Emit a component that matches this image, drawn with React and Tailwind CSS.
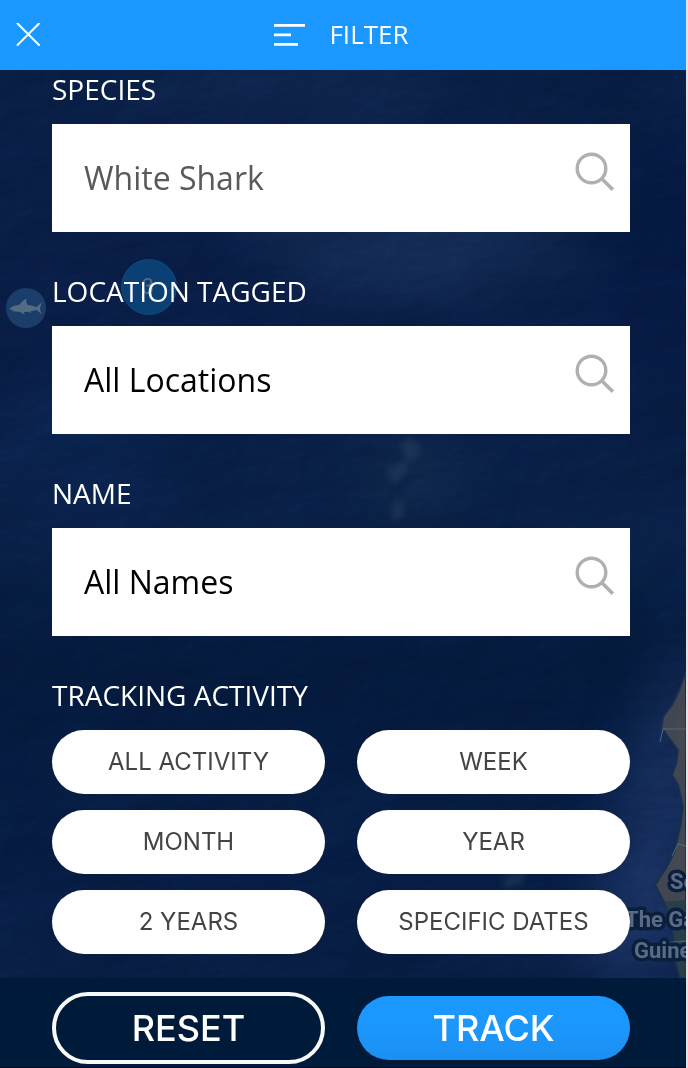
import React from "react";

const fields = [
  { id: "species", label: "SPECIES", value: "White Shark", tone: "text-[#58595b]" },
  { id: "location", label: "LOCATION TAGGED", value: "All Locations", tone: "text-black" },
  { id: "name", label: "NAME", value: "All Names", tone: "text-black" },
];

const periods = ["ALL ACTIVITY", "WEEK", "MONTH", "YEAR", "2 YEARS", "SPECIFIC DATES"];

function SearchIcon() {
  return (
    <svg className="mt-7 size-10 shrink-0" viewBox="0 0 40 40" fill="none" stroke="#b0b0b0" aria-hidden="true">
      <circle cx="17.5" cy="16.5" r="14.3" strokeWidth="3.4" />
      <path d="M27.8 26.8L38.8 37.6" strokeWidth="3.6" />
    </svg>
  );
}

function OceanMap() {
  return (
    <svg
      className="absolute inset-0 size-full"
      viewBox="0 0 686 1068"
      preserveAspectRatio="xMidYMid slice"
      aria-hidden="true"
    >
      <defs>
        <linearGradient id="sea" x1="0" y1="0" x2="0" y2="1">
          <stop offset="0" stopColor="#0b2149" />
          <stop offset="0.3" stopColor="#0a1e48" />
          <stop offset="0.5" stopColor="#0a2149" />
          <stop offset="0.63" stopColor="#051b3e" />
          <stop offset="0.8" stopColor="#081e47" />
          <stop offset="1" stopColor="#0c2148" />
        </linearGradient>
        <filter id="soft" x="-50%" y="-50%" width="200%" height="200%" colorInterpolationFilters="sRGB">
          <feGaussianBlur stdDeviation="26" />
        </filter>
        <filter id="haze" x="-50%" y="-50%" width="200%" height="200%" colorInterpolationFilters="sRGB">
          <feGaussianBlur stdDeviation="3" />
        </filter>
        <filter id="relief" x="0" y="0" width="100%" height="100%" colorInterpolationFilters="sRGB">
          <feTurbulence type="fractalNoise" baseFrequency="0.012 0.022" numOctaves="5" seed="8" />
          <feDiffuseLighting surfaceScale="5" diffuseConstant="0.65" lightingColor="#ffffff">
            <feDistantLight azimuth="225" elevation="50" />
          </feDiffuseLighting>
        </filter>
        <filter id="depth" x="0" y="0" width="100%" height="100%" colorInterpolationFilters="sRGB">
          <feTurbulence type="fractalNoise" baseFrequency="0.006 0.008" numOctaves="2" seed="4" />
          <feColorMatrix values="0 0 0 0 0.02  0 0 0 0 0.09  0 0 0 0 0.22  2 0 0 0 -0.7" />
        </filter>
      </defs>
      <rect width="686" height="1068" fill="url(#sea)" />
      <g filter="url(#soft)">
        <ellipse cx="420" cy="240" rx="170" ry="60" fill="#142c56" />
        <ellipse cx="280" cy="90" rx="160" ry="40" fill="#10264f" />
        <ellipse cx="660" cy="250" rx="50" ry="120" fill="#061a43" />
        <ellipse cx="90" cy="450" rx="100" ry="50" fill="#0b2652" />
        <ellipse cx="410" cy="480" rx="50" ry="60" fill="#10294e" />
        <path d="M700 610L650 700L625 800L590 980H700Z" fill="#1a3363" />
      </g>
      <rect width="686" height="1068" filter="url(#depth)" opacity="0.35" />
      <rect width="686" height="1068" filter="url(#relief)" opacity="0.3" className="mix-blend-soft-light" />
      <g fill="#273f5e" opacity="0.55" filter="url(#haze)">
        <path d="M400 444l12-6 10 12 -10 12 -8-4z" />
        <path d="M388 468l16-6 6 10 -12 14 -8-6z" />
        <path d="M392 504l10-6 2 18 -12 6z" />
        <path d="M506 876l20-4 -4 12 -20 4z" />
      </g>
      <path d="M414 470L400 490L392 492L404 476Z" fill="#06173a" opacity="0.6" filter="url(#haze)" />
      <path
        d="M686 672L678 693L672 705L663 717L661 730L664 731L668 737L672 742L678 750L676 764L672 775L678 785L683 807L680 827L674 853L666 868L655 885L663 900L672 920L675 960L680 978H686Z"
        fill="#414752"
        stroke="#182f50"
        strokeWidth="2"
      />
      <path d="M686 700L676 725L678 742L686 760ZM686 830L676 858L666 880L686 884Z" fill="#4b4c55" opacity="0.5" filter="url(#haze)" />
      <path d="M686 900L664 902L672 925L675 958L680 978H686Z" fill="#203c48" opacity="0.75" />
      <path d="M660 742L663 729H686M672 856L678 844L686 846M663 943L686 941" fill="none" stroke="#50697b" strokeWidth="1" />
      <g
        className="font-[Roboto,sans-serif] text-[22px] font-bold"
        fill="#5b6b83"
        stroke="#0a1f3c"
        strokeWidth="7"
        strokeLinejoin="round"
        paintOrder="stroke"
      >
        <text x="670" y="889">Se</text>
        <text x="625" y="927">The Ga</text>
        <text x="634" y="958">Guine</text>
      </g>
      <circle cx="149" cy="287" r="27.5" fill="#0a4073" stroke="#0c4a80" />
      <text x="148" y="294" textAnchor="middle" className="font-[Roboto,sans-serif] text-[22px]" fill="#526b83">
        3
      </text>
      <circle cx="26" cy="308" r="20" fill="#1a3e69" />
      <path
        d="M9.500 308.500C12 306 16 305.200 19.500 304.800C21.500 302 24 299.600 26.300 298.800C26 301.500 26.500 303.600 27.500 305C31 305.400 34 306.200 36.500 307.200C38 305.500 40 303.400 42.200 302.400C41 305 40 307 40 308.600C40.200 311 41 312.500 41.600 314C39.500 312.800 38 310.800 36.500 309.800C34 310.600 32 311 30.500 311.300L31 313L28 311.800C26.500 312 25 312 23.500 312L24.800 314.300C22.500 313.800 21 312.800 20 311.800C16.500 311.800 13.500 311.600 11.500 311L14 310L10.500 309.800Z"
        fill="#546b83"
      />
    </svg>
  );
}

export default function App() {
  return (
    <div className="relative flex min-h-screen flex-col overflow-hidden border-r-2 border-[#e4e4e4] bg-[#0a1e48] font-['Open_Sans',sans-serif]">
      <OceanMap />
      <header className="relative flex h-[70px] items-center bg-[#1b98ff] px-4 text-white">
        <button type="button" aria-label="Close" className="size-6">
          <svg viewBox="0 0 24 24" className="size-6" fill="none" stroke="currentColor" strokeWidth="2" strokeLinecap="round">
            <path d="M1.500 0.500L23 22M23 0.500L1.500 22" />
          </svg>
        </button>
        <h1 className="flex flex-1 items-center justify-center gap-6 pr-7 pb-[2px] text-[26px] leading-9">
          <svg viewBox="0 0 32 24" className="h-6 w-8" fill="currentColor" aria-hidden="true">
            <path d="M1 2h31v2.700H1zM1 11.500h17v2.700H1zM1 21h24v2.700H1z" />
          </svg>
          FILTER
        </h1>
      </header>

      <form className="relative flex flex-1 flex-col" onSubmit={(event) => event.preventDefault()}>
        <div className="flex flex-1 flex-col gap-10 pr-14 pb-6 pl-[52px]">
          {fields.map((field) => (
            <div key={field.id} className="flex flex-col gap-4">
              <label htmlFor={field.id} className="text-[28px] leading-[38px] text-white">
                {field.label}
              </label>
              <div className="flex h-[108px] bg-white pr-4 pl-8">
                <input
                  id={field.id}
                  type="text"
                  defaultValue={field.value}
                  className={`min-w-0 flex-1 bg-transparent text-[32px] outline-none ${field.tone}`}
                />
                <SearchIcon />
              </div>
            </div>
          ))}
          <fieldset>
            <legend className="mb-4 text-[28px] leading-[38px] text-white">TRACKING ACTIVITY</legend>
            <div className="grid grid-cols-2 gap-x-8 gap-y-4">
              {periods.map((period) => (
                <button
                  key={period}
                  type="button"
                  className="h-16 rounded-full bg-white font-[Inter,sans-serif] text-2xl text-[#444444]"
                >
                  {period}
                </button>
              ))}
            </div>
          </fieldset>
        </div>

        <div className="grid grid-cols-2 items-center gap-x-8 border-b border-[#000b22] bg-[#001a3a] pt-[14px] pr-14 pb-[3px] pl-[52px] font-[Inter,sans-serif] text-4xl font-medium text-white">
          <button type="reset" className="h-[72px] rounded-full border-4 border-[#f8f8f8]">
            RESET
          </button>
          <button type="submit" className="h-16 rounded-full bg-linear-to-b from-[#1b98ff] from-40% to-[#1b8ff0]">
            TRACK
          </button>
        </div>
      </form>
    </div>
  );
}
